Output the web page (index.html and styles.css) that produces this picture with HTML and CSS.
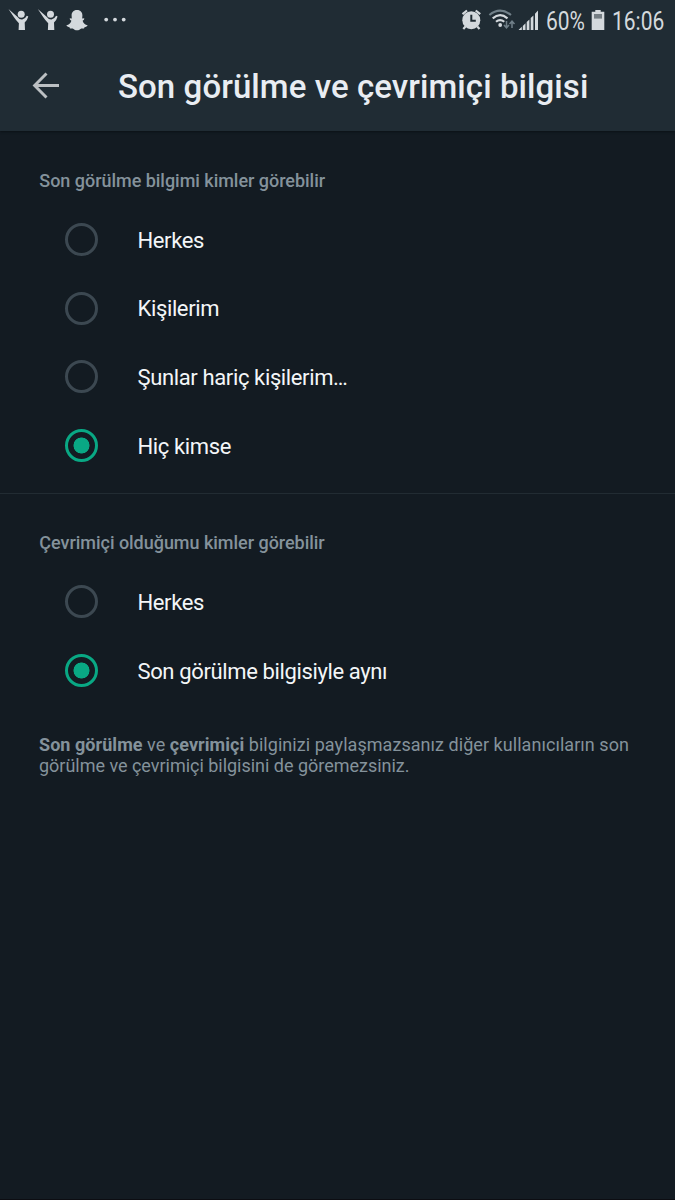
FILE: index.html
```html
<!DOCTYPE html>
<html lang="tr">
<head>
<meta charset="utf-8">
<title>Son görülme ve çevrimiçi bilgisi</title>
<link rel="stylesheet" href="styles.css">
</head>
<body>
<header class="top">
  <div class="status">
    <svg class="notices" width="130" height="40" viewBox="0 0 130 40">
      <g id="person">
        <path d="M8.500 9L17.300 16.800Q19.300 19.800 22.200 19.600Q25 19.300 26.800 15.800L28.300 16.600Q27.500 20 24.700 22.500L25 30H18.600L18.900 23.300Q15.500 19.500 14 17.200Z"/>
        <circle cx="21.200" cy="14.200" r="3.500"/>
      </g>
      <use href="#person" x="29.300"/>
      <path d="M77 10C80.800 10 82.400 12.600 82.400 15.300L82.200 18.400L84.300 18.300L84 19.800L82.600 20.700C83.400 23.100 85 24.600 87.600 25.300C87.300 26.500 85.900 27 84.500 27.200L84 28.500L81.300 28.400C79.500 29.700 78.600 30.200 77 30.200S74.500 29.700 72.700 28.400L70 28.500L69.500 27.200C68.100 27 66.700 26.500 66.400 25.300C69 24.600 70.600 23.100 71.400 20.700L70 19.800L69.700 18.300L71.800 18.400L71.600 15.300C71.600 12.600 73.200 10 77 10Z"/>
      <circle cx="106.200" cy="19.600" r="1.900"/><circle cx="115" cy="19.600" r="1.900"/><circle cx="123.700" cy="19.600" r="1.900"/>
    </svg>
    <div class="system">
      <svg width="80" height="40" viewBox="460 0 80 40">
        <path d="M462.500 14.200L467 10.500M475.700 10.500L480.200 14.200M465.500 26.500L463.300 29M477.300 26.500L479.500 29" fill="none" stroke="#d4d9dd" stroke-width="2.200"/>
        <circle cx="471.300" cy="20.200" r="9"/>
        <path d="M471.300 14.800V20.800H475.800" fill="none" stroke="#202c34" stroke-width="2"/>
        <g fill="none" stroke="#d4d9dd" stroke-width="2.100">
          <path d="M489.400 15Q500 6.300 511 15" stroke="#718089"/>
          <path d="M492.700 18.400Q500 12 507.500 18.400"/>
          <path d="M496 21.800Q500 18.300 504.300 21.800"/>
        </g>
        <circle cx="500.200" cy="25" r="1.900"/>
        <path d="M506.500 21V27.500M504 25L506.500 27.800L509 25M512 28V21.500M509.500 24L512 21.200L514.500 24" fill="none" stroke="#718089" stroke-width="1.500"/>
        <path d="M518.500 30L521.800 26.800V30ZM522.800 25.900L525.500 23.300V30H522.800ZM526.700 22.100L529.400 19.400V30H526.700ZM530.700 18.100L533.400 15.400V30H530.700ZM535 13.800L538 10.500V30H535Z"/>
      </svg>
      <span class="readout percent">60%</span>
      <svg class="battery" width="14" height="40" viewBox="0 0 14 40"><path d="M4.300 10H9.700V11.700H13.300V30H.7V11.700H4.300Z"/><path d="M3 14H11V18.600H3Z" fill="#747d83"/></svg>
      <span class="readout clock">16:06</span>
    </div>
  </div>
  <div class="bar">
    <svg class="back" width="28" height="28" viewBox="0 0 28 28"><path d="M27 13.500H3M14.500 1.500L2.600 13.500L14.500 25.500" fill="none" stroke="#bcc0c3" stroke-width="2.900"/></svg>
    <h1 class="title">Son görülme ve çevrimiçi bilgisi</h1>
  </div>
</header>
<main>
  <section class="group">
    <h2 class="heading">Son görülme bilgimi kimler görebilir</h2>
    <div class="option"><i class="radio"></i><span>Herkes</span></div>
    <div class="option"><i class="radio"></i><span>Kişilerim</span></div>
    <div class="option"><i class="radio"></i><span>Şunlar hariç kişilerim…</span></div>
    <div class="option"><i class="radio on"></i><span>Hiç kimse</span></div>
  </section>
  <section class="group second">
    <h2 class="heading">Çevrimiçi olduğumu kimler görebilir</h2>
    <div class="option"><i class="radio"></i><span>Herkes</span></div>
    <div class="option"><i class="radio on"></i><span>Son görülme bilgisiyle aynı</span></div>
  </section>
  <p class="note"><b>Son görülme</b> ve <b>çevrimiçi</b> bilginizi paylaşmazsanız diğer kullanıcıların son<br><span class="tail">görülme ve çevrimiçi bilgisini de göremezsiniz.</span></p>
</main>
</body>
</html>
```
FILE: styles.css
```css
* { box-sizing: border-box; }
body { margin: 0; height: 1200px; background: #131b22; color: #f3f6f8; font-family: Roboto, sans-serif; overflow: hidden; border-bottom: 1px solid #0c0d12; }
.top { height: 131px; background: #202c34; box-shadow: 0 1px 2px #0b1217; }
.status { height: 41px; display: flex; justify-content: space-between; fill: #d4d9dd; }
.status svg { display: block; flex: none; }
.system { display: flex; width: 215px; }
.readout { color: #d4d9dd; font-size: 25px; line-height: 43px; height: 43px; white-space: nowrap; transform-origin: 0 50%; transform: scaleX(.84); }
.percent { width: 39px; margin-left: 6px; }
.battery { margin-left: 6px; }
.clock { width: 54px; margin-left: 7px; }
.bar { height: 90px; display: flex; align-items: center; padding-left: 32px; }
.title { margin: 2px 0 0 58px; font-size: 33px; letter-spacing: .08px; font-weight: 500; line-height: 40px; white-space: nowrap; color: #e9edf2; }
.group { padding-top: 37px; height: 362.500px; border-bottom: 1px solid #222c33; }
.heading { margin: 0 0 12px 39.300px; font-size: 18px; letter-spacing: -.03px; line-height: 25px; font-weight: 500; color: #84929b; white-space: nowrap; }
.option { height: 68.750px; display: flex; align-items: center; padding-left: 65px; gap: 39.500px; font-size: 22px; letter-spacing: -.37px; line-height: 28px; white-space: nowrap; }
.option span { padding-top: 2.500px; }
.radio { width: 33px; height: 33px; border: 3px solid #3c4851; border-radius: 50%; flex: none; }
.radio.on { border-color: #09a884; background: radial-gradient(circle, #09a884 7.700px, transparent 8.300px); }
.second { height: auto; border: 0; padding-top: 36.500px; }
.second .heading { margin-bottom: 12.500px; }
.note { margin: 29px 0 0 39px; font-size: 18px; letter-spacing: .05px; line-height: 21px; color: #84929b; white-space: nowrap; }
.tail { letter-spacing: -.02px; }
```
